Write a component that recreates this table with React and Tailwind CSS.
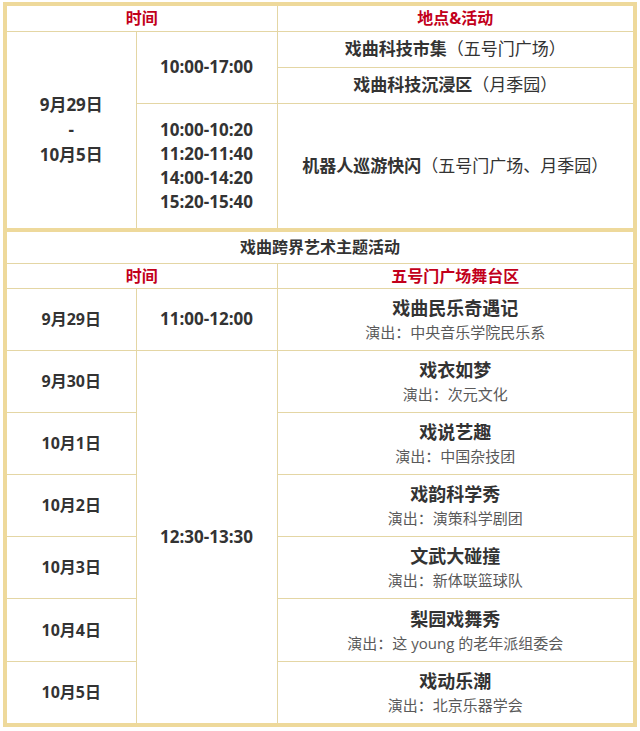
import React from "react";

const line = "border border-[#e4d6a4]";
const head = `${line} text-[16px] font-bold text-[#c2001b] leading-none`;
const bold = "font-bold text-[#333333]";

const shows = [
  { date: "9月29日", title: "戏曲民乐奇遇记", by: "中央音乐学院民乐系" },
  { date: "9月30日", title: "戏衣如梦", by: "次元文化" },
  { date: "10月1日", title: "戏说艺趣", by: "中国杂技团" },
  { date: "10月2日", title: "戏韵科学秀", by: "演策科学剧团" },
  { date: "10月3日", title: "文武大碰撞", by: "新体联篮球队" },
  { date: "10月4日", title: "梨园戏舞秀", by: "这 young 的老年派组委会" },
  { date: "10月5日", title: "戏动乐潮", by: "北京乐器学会" },
];

const Cols = () => (
  <colgroup>
    <col className="w-[129px]" />
    <col className="w-[141px]" />
    <col />
  </colgroup>
);

export default function App() {
  return (
    <div
      className="w-[640px] min-h-[731px] bg-white pt-[2px] pl-[3px]"
      style={{ fontFamily: '"Open Sans", "Noto Sans CJK SC", sans-serif' }}
    >
      <div className="w-[634px] border-4 border-[#eed99b] text-center">
        <table className="w-full table-fixed border-collapse border-hidden">
          <Cols />
          <thead>
            <tr className="h-[25px]">
              <th colSpan={2} className={head}>时间</th>
              <th className={head}>地点&amp;活动</th>
            </tr>
          </thead>
          <tbody className="text-[17px]">
            <tr className="h-[36px]">
              <td rowSpan={3} className={`${line} ${bold} leading-[25px]`}>
                <div>9月29日</div>
                <div>-</div>
                <div>10月5日</div>
              </td>
              <td rowSpan={2} className={`${line} ${bold}`}>10:00-17:00</td>
              <td className={`${line} text-[#333333]`}>
                <span className="font-bold">戏曲科技市集</span>（五号门广场）
              </td>
            </tr>
            <tr className="h-[36px]">
              <td className={`${line} text-[#333333]`}>
                <span className="font-bold">戏曲科技沉浸区</span>（月季园）
              </td>
            </tr>
            <tr className="h-[125px]">
              <td className={`${line} ${bold} leading-[24px]`}>
                <div>10:00-10:20</div>
                <div>11:20-11:40</div>
                <div>14:00-14:20</div>
                <div>15:20-15:40</div>
              </td>
              <td className={`${line} text-[#333333]`}>
                <span className="font-bold">机器人巡游快闪</span>（五号门广场、月季园）
              </td>
            </tr>
          </tbody>
        </table>

        <div className="h-[4px] bg-[#eed99b]" />

        <table className="w-full table-fixed border-collapse border-hidden">
          <Cols />
          <thead>
            <tr className="h-[31px]">
              <th colSpan={3} className={`${line} text-[16px] ${bold}`}>戏曲跨界艺术主题活动</th>
            </tr>
            <tr className="h-[25px]">
              <th colSpan={2} className={head}>时间</th>
              <th className={head}>五号门广场舞台区</th>
            </tr>
          </thead>
          <tbody>
            {shows.map((s, i) => (
              <tr key={s.date} className={i === 5 ? "h-[63px]" : "h-[62px]"}>
                <td className={`${line} ${bold} text-[16px]`}>{s.date}</td>
                {i === 0 && (
                  <td className={`${line} ${bold} text-[17px]`}>11:00-12:00</td>
                )}
                {i === 1 && (
                  <td rowSpan={6} className={`${line} ${bold} text-[17px]`}>12:30-13:30</td>
                )}
                <td className={line}>
                  <div className={`${bold} text-[18px] leading-[26px]`}>{s.title}</div>
                  <div className="text-[15px] leading-[22px] text-[#5a5a5a]">演出：{s.by}</div>
                </td>
              </tr>
            ))}
          </tbody>
        </table>
      </div>
    </div>
  );
}
